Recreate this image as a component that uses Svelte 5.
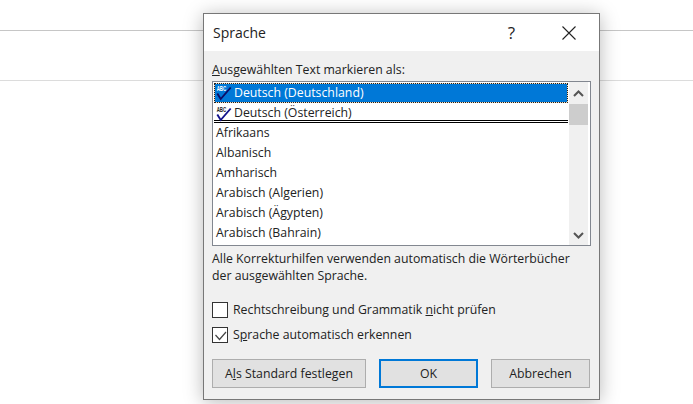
<script>
  const langs = ['Afrikaans', 'Albanisch', 'Amharisch', 'Arabisch (Algerien)', 'Arabisch (Ägypten)', 'Arabisch (Bahrain)'];
</script>

<div class="page">
  <div class="rule first"></div>
  <div class="rule second"></div>

  <div class="dialog">
    <header class="titlebar">
      <span class="title">Sprache</span>
      <span class="help">?</span>
      <svg class="close" width="14" height="14" viewBox="0 0 14 14"><path d="M.5.5l13 13M13.5.5l-13 13" stroke="#222" stroke-width="1.1" fill="none"/></svg>
    </header>

    <div class="body">
      <div class="label"><u>A</u>usgewählten Text markieren als:</div>

      <div class="listbox">
        <div class="items">
          <div class="row selected">
            <svg class="abc" width="18" height="16" viewBox="0 0 18 16"><text x="0.7" y="6" font-size="6.5" font-weight="700" font-family="Liberation Sans, sans-serif" fill="#fff" textLength="9.5" lengthAdjust="spacingAndGlyphs">ABC</text><path d="M1.3 8.5l3.4 5.5L14.7 2.5" stroke="#0c0c66" stroke-width="1.9" fill="none"/></svg>
            <span>Deutsch (Deutschland)</span>
          </div>
          <div class="row second-row">
            <svg class="abc" width="18" height="16" viewBox="0 0 18 16"><text x="0.7" y="6" font-size="6.5" font-weight="700" font-family="Liberation Sans, sans-serif" fill="#222" textLength="9.5" lengthAdjust="spacingAndGlyphs">ABC</text><path d="M1.3 8.5l3.4 5.5L14.7 2.5" stroke="#12128c" stroke-width="1.9" fill="none"/></svg>
            <span>Deutsch (Österreich)</span>
          </div>
          <div class="divider"></div>
          {#each langs as lang}
            <div class="row plain">{lang}</div>
          {/each}
        </div>
        <div class="scrollbar">
          <svg class="arrow" width="11" height="7" viewBox="0 0 11 7"><path d="M1 6l4.5-4.5L10 6" stroke="#555" stroke-width="2" fill="none"/></svg>
          <div class="thumb"></div>
          <div class="track"></div>
          <svg class="arrow" width="11" height="7" viewBox="0 0 11 7"><path d="M1 1l4.5 4.5L10 1" stroke="#555" stroke-width="2" fill="none"/></svg>
        </div>
      </div>

      <p class="note">Alle Korrekturhilfen verwenden automatisch die Wörterbücher<br />der ausgewählten Sprache.</p>

      <div class="check first-check">
        <span class="box"></span>
        <span>Rechtschreibung und Grammatik <u>n</u>icht prüfen</span>
      </div>
      <div class="check">
        <span class="box">
          <svg width="14" height="14" viewBox="0 0 14 14"><path d="M2.5 7l4 4.5L13 4" stroke="#444" stroke-width="1.2" fill="none"/></svg>
        </span>
        <span>S<u>p</u>rache automatisch erkennen</span>
      </div>

      <div class="buttons">
        <button class="wide">A<u>l</u>s Standard festlegen</button>
        <button class="primary">OK</button>
        <button>Abbrechen</button>
      </div>
    </div>
  </div>
</div>

<style>
  :global(body) { margin: 0; background: #fff; }
  .page {
    position: relative;
    width: 693px;
    height: 404px;
    overflow: hidden;
    background: #fff;
    font-family: "Open Sans", "Noto Sans", sans-serif;
    font-size: 12.3px;
    color: #222;
  }
  .rule { position: absolute; left: 0; right: 0; height: 1px; background: #c6c6c6; }
  .rule.first { top: 30px; }
  .rule.second { top: 80px; background: #dcdcdc; }
  .dialog {
    position: absolute;
    left: 203px;
    top: 13px;
    width: 395px;
    height: 385px;
    border: 1px solid #777;
    background: #f0f0f0;
    box-shadow: 0 2px 18px rgba(0, 0, 0, 0.28);
  }
  .titlebar {
    height: 37px;
    background: #fff;
    display: flex;
    align-items: center;
    padding: 0 23px 0 9px;
  }
  .title { font-size: 14px; flex: 1; }
  .help { font-size: 17px; margin-right: 47px; }
  .body { padding: 0 8px; }
  .label { height: 30px; line-height: 37px; }
  .listbox {
    display: flex;
    height: 163px;
    width: 377px;
    border: 1px solid #828790;
    background: #fff;
    overflow: hidden;
  }
  .items { width: 354px; padding: 1px 0 0 1px; }
  .row { display: flex; align-items: center; height: 20px; padding-left: 2px; white-space: nowrap; box-sizing: border-box; }
  .row.selected {
    color: #fff;
    border: 1px dotted #222;
    padding-left: 1px;
    padding-bottom: 1px;
    background: linear-gradient(#0078d7, #0078d7) padding-box, #f7dcb8 border-box;
  }
  .row.selected .abc { margin-top: 1px; }
  .row.second-row { height: 17px; padding-top: 2px; }
  .row.second-row .abc { margin-top: 3px; }
  .abc { flex: none; }
  .divider { height: 1px; border-top: 1px solid #000; border-bottom: 1px solid #000; margin-bottom: -1px; }
  .scrollbar {
    width: 19px;
    background: #f0f0f0;
    display: flex;
    flex-direction: column;
    align-items: center;
    margin-left: 1px;
  }
  .arrow { flex: none; }
  .scrollbar .arrow:first-child { margin: 8px 0 7px; }
  .scrollbar .arrow:last-child { margin: 0 0 6px; }
  .thumb { width: 19px; height: 21px; background: #cdcdcd; flex: none; }
  .track { flex: 1; }
  .note { margin: 4px 0 0; line-height: 17px; height: 34px; }
  .check { display: flex; align-items: center; height: 25px; gap: 5px; }
  .first-check { margin-top: 13px; }
  .box {
    width: 14px;
    height: 14px;
    border: 1px solid #333;
    background: #fff;
    display: block;
    flex: none;
    line-height: 0;
  }
  .box + span { line-height: 16px; }
  .buttons { display: flex; gap: 13px; margin-top: 12px; }
  button {
    width: 99px;
    height: 29px;
    padding: 0;
    border: 1px solid #adadad;
    background: #e1e1e1;
    color: #222;
    font: inherit;
    box-sizing: border-box;
  }
  button.wide { width: 154px; }
  button.primary { border: 2px solid #0078d7; }
</style>
